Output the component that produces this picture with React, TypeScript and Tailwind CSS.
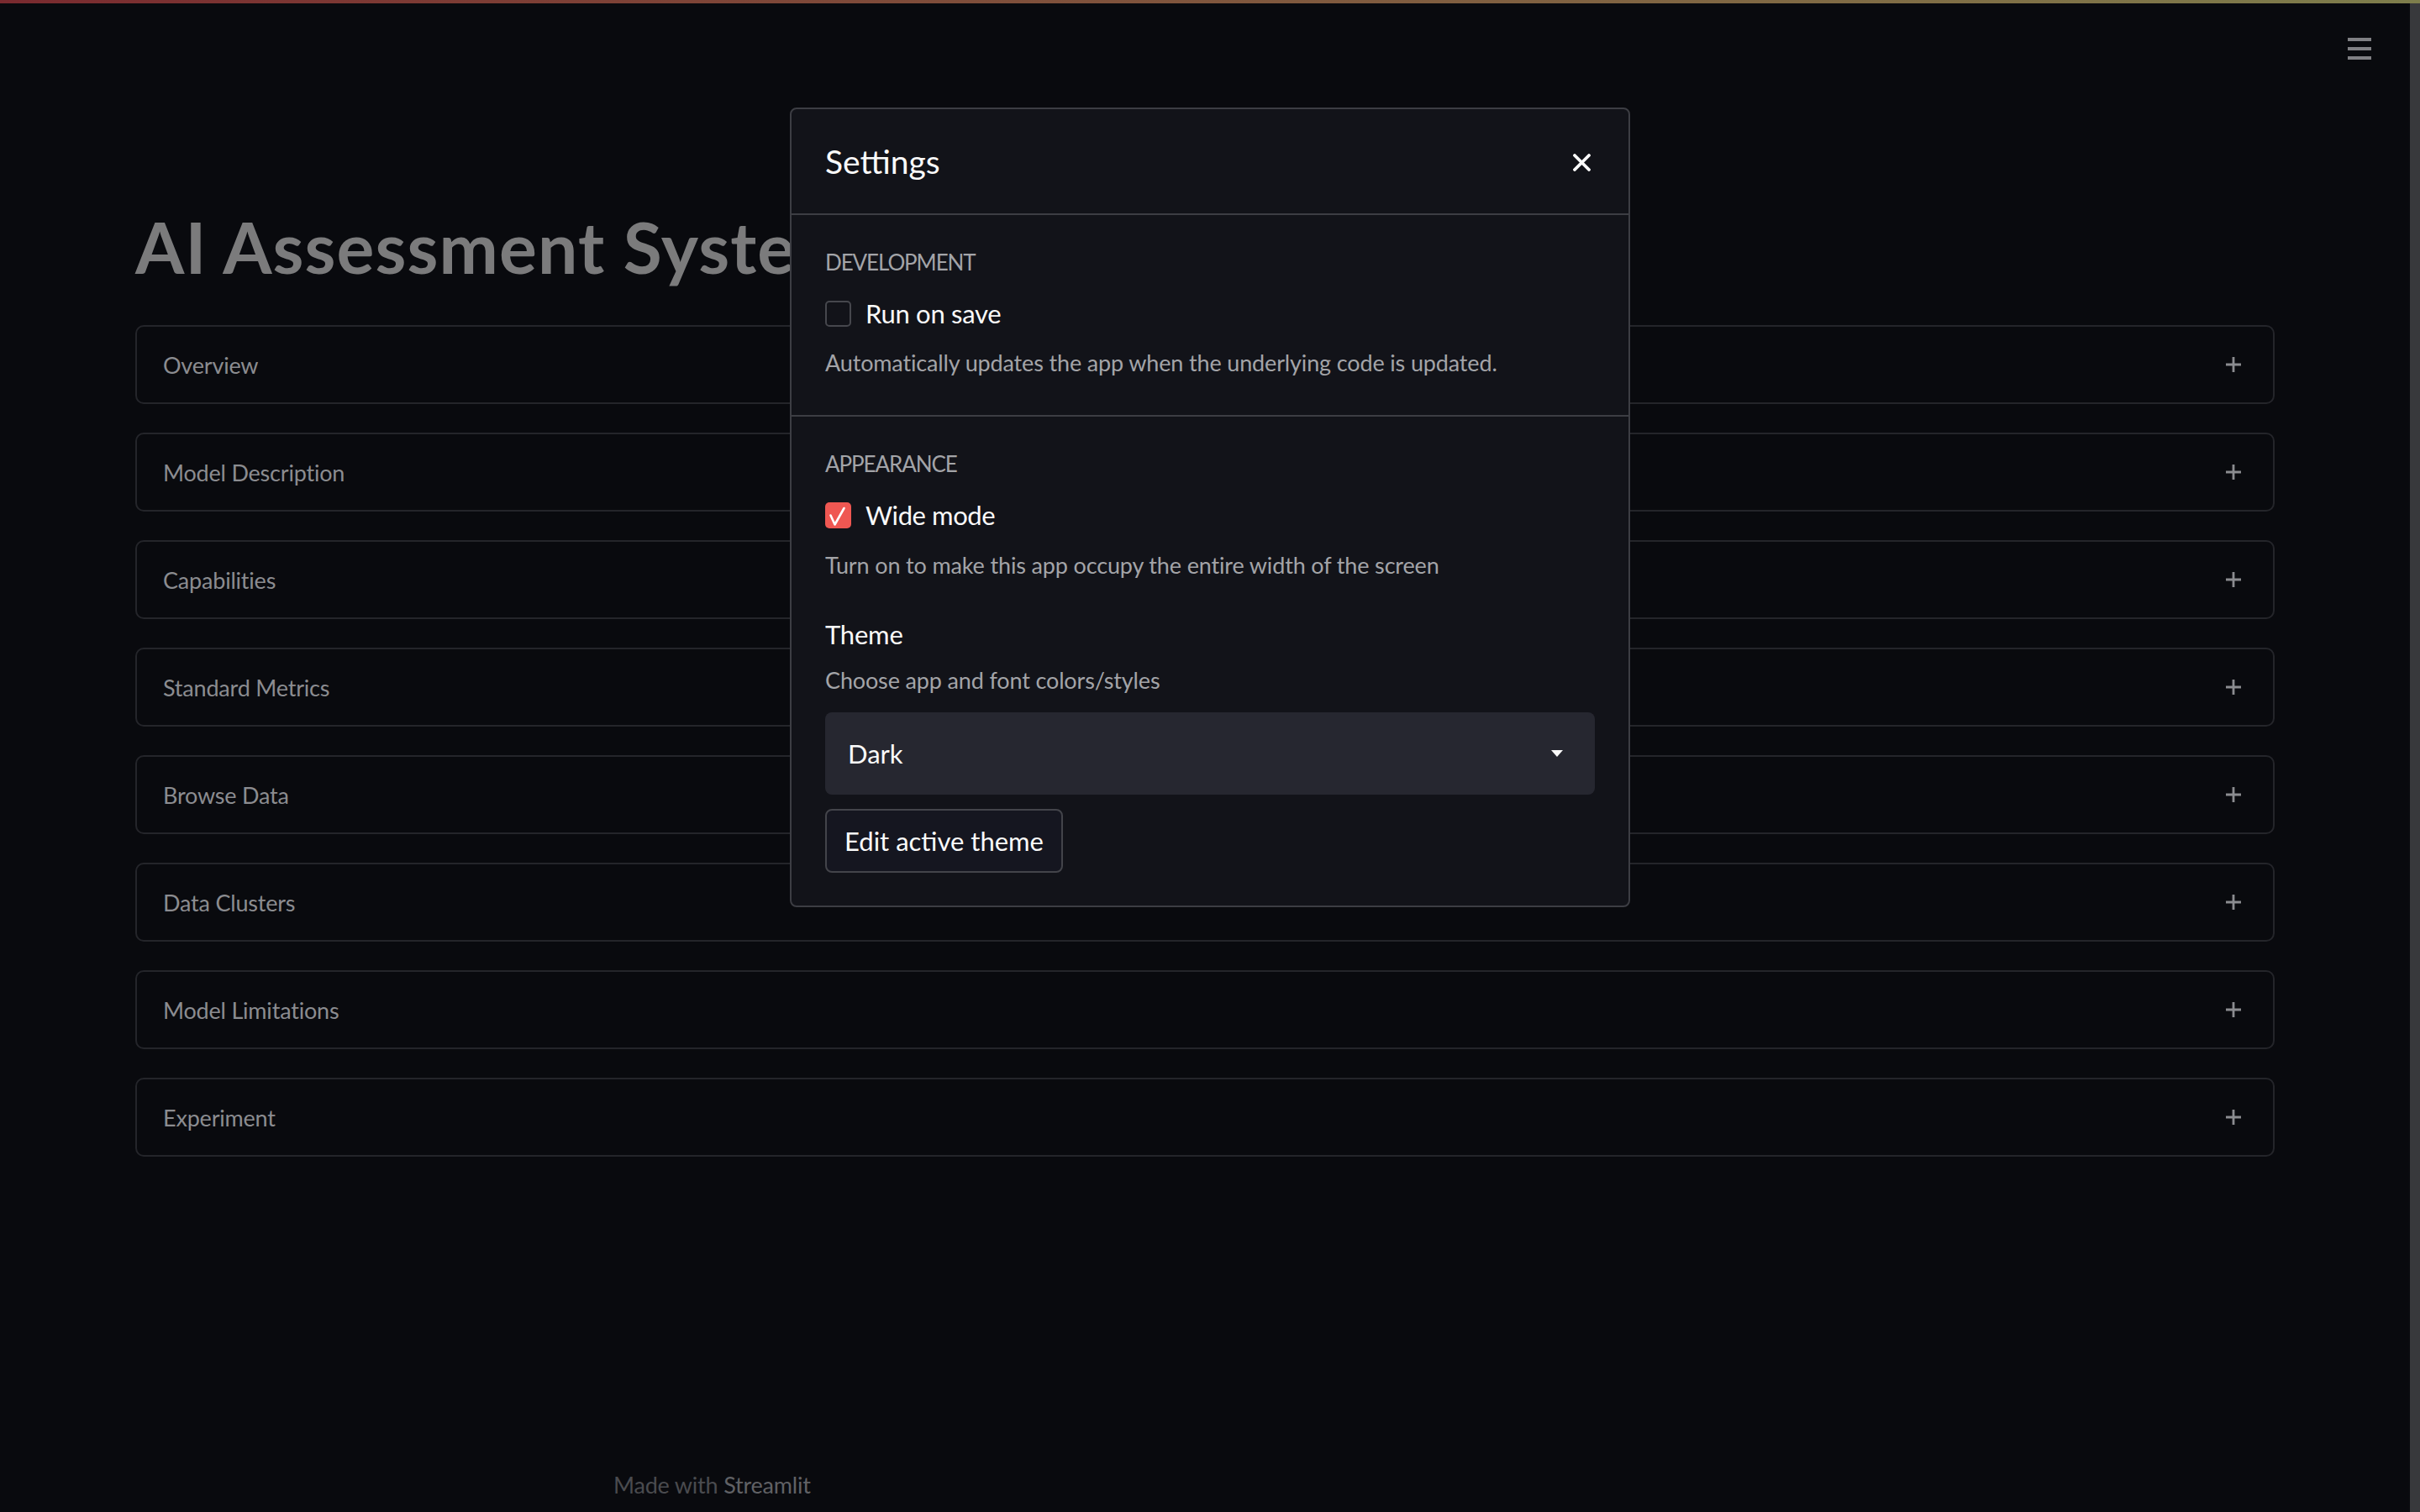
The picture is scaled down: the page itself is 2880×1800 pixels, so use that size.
import React from "react";

const sections = [
  "Overview",
  "Model Description",
  "Capabilities",
  "Standard Metrics",
  "Browse Data",
  "Data Clusters",
  "Model Limitations",
  "Experiment",
];

function PlusIcon() {
  return (
    <svg width="18" height="18" viewBox="0 0 18 18" fill="none">
      <path d="M9 0v18M0 9h18" stroke="#8b8c90" strokeWidth="2.8" />
    </svg>
  );
}

function CloseIcon() {
  return (
    <svg width="21" height="21" viewBox="0 0 21 21" fill="none">
      <path d="M2 2L19 19M19 2L2 19" stroke="#fafafa" strokeWidth="3.8" strokeLinecap="round" />
    </svg>
  );
}

function Caret() {
  return (
    <svg width="14" height="8" viewBox="0 0 14 8">
      <path d="M0 0h14L7 8z" fill="#fafafa" />
    </svg>
  );
}

function Checkbox({ checked }: { checked: boolean }) {
  if (checked) {
    return (
      <div className="w-[31px] h-[31px] shrink-0 rounded-[5px] bg-[#ef5752] flex items-center justify-center">
        <svg width="31" height="31" viewBox="0 0 31 31" fill="none">
          <path d="M6.5 15.5L11.5 26.5L22.5 7" stroke="#ffffff" strokeWidth="2.6" strokeLinejoin="round" strokeLinecap="round" />
        </svg>
      </div>
    );
  }
  return <div className="w-[31px] h-[31px] shrink-0 rounded-[5px] border-2 border-[#46474d]" />;
}

export default function App() {
  return (
    <div className="relative w-[2880px] h-[1800px] overflow-hidden bg-[#090a0e] font-['Lato',sans-serif] flex flex-col">
      <div className="h-[4px] w-full shrink-0 bg-linear-to-r from-[#7a2a2f] to-[#7e7e4c]" />
      <div className="flex flex-1 min-h-0">
        <main className="flex-1 flex flex-col px-[161px] pt-[248px]">
          <h1 className="text-[84px] leading-none font-bold text-[#7b7b7c] whitespace-nowrap tracking-[1.1px]">
            AI Assessment System
          </h1>
          <div className="mt-[51px] flex flex-col gap-[34px]">
            {sections.map((s) => (
              <div
                key={s}
                className="h-[94px] border-2 border-[#24252a] rounded-[10px] flex items-center justify-between pl-[31px] pr-[38px]"
              >
                <span className="text-[27px] leading-none tracking-[-0.2px] text-[#8b8c90]">{s}</span>
                <PlusIcon />
              </div>
            ))}
          </div>
          <div className="mt-auto pb-[19px] pl-[569px] text-[27px] leading-none tracking-[-0.2px] whitespace-nowrap">
            <span className="text-[#4a4b4f]">Made with </span>
            <span className="text-[#606165]">Streamlit</span>
          </div>
        </main>
        <div className="w-[12px] shrink-0 bg-[#38393c]" />
      </div>

      {/* header menu */}
      <div className="absolute top-[45px] right-[58px] flex flex-col gap-[7px]">
        <div className="w-[28px] h-[4px] bg-[#808084]" />
        <div className="w-[28px] h-[4px] bg-[#808084]" />
        <div className="w-[28px] h-[4px] bg-[#808084]" />
      </div>

      {/* settings modal */}
      <div className="absolute left-[940px] top-[128px] w-[1000px] h-[952px] border-2 border-[#3c3d43] rounded-[8px] bg-[#121319] flex flex-col">
        <div className="h-[124px] shrink-0 flex items-center justify-between pl-[40px] pr-[45px]">
          <span className="text-[39px] leading-none text-[#fafafa]">Settings</span>
          <div className="mt-[3px]">
            <CloseIcon />
          </div>
        </div>
        <div className="h-[2px] shrink-0 bg-[#3c3d43]" />
        <div className="px-[40px] pt-[43px] pb-[49px] flex flex-col">
          <div className="text-[26px] leading-none tracking-[-1.1px] text-[#a3a4a8] uppercase">Development</div>
          <div className="mt-[33px] flex items-center gap-[17px]">
            <Checkbox checked={false} />
            <span className="text-[31px] leading-none tracking-[-0.3px] text-[#fafafa]">Run on save</span>
          </div>
          <div className="mt-[29px] text-[27px] leading-none tracking-[-0.15px] text-[#a3a4a8]">
            Automatically updates the app when the underlying code is updated.
          </div>
        </div>
        <div className="h-[2px] shrink-0 bg-[#3c3d43]" />
        <div className="px-[40px] pt-[43px] flex flex-col">
          <div className="text-[26px] leading-none tracking-[-1.1px] text-[#a3a4a8] uppercase">Appearance</div>
          <div className="mt-[33px] flex items-center gap-[17px]">
            <Checkbox checked={true} />
            <span className="text-[31px] leading-none tracking-[-0.4px] text-[#fafafa]">Wide mode</span>
          </div>
          <div className="mt-[30px] text-[27px] leading-none tracking-[-0.15px] text-[#a3a4a8]">
            Turn on to make this app occupy the entire width of the screen
          </div>
          <div className="mt-[54px] text-[31px] leading-none tracking-[-0.2px] text-[#fafafa]">Theme</div>
          <div className="mt-[25px] text-[27px] leading-none tracking-[-0.15px] text-[#a3a4a8]">
            Choose app and font colors/styles
          </div>
          <div className="mt-[25px] h-[98px] rounded-[8px] bg-[#262730] flex items-center justify-between pl-[27px] pr-[38px]">
            <span className="text-[31px] leading-none text-[#fafafa]">Dark</span>
            <Caret />
          </div>
          <div className="mt-[17px] w-[283px] h-[76px] rounded-[8px] border-2 border-[#43444a] bg-[#151620] flex items-center justify-center">
            <span className="text-[31px] leading-none text-[#fafafa]">Edit active theme</span>
          </div>
        </div>
      </div>
    </div>
  );
}
